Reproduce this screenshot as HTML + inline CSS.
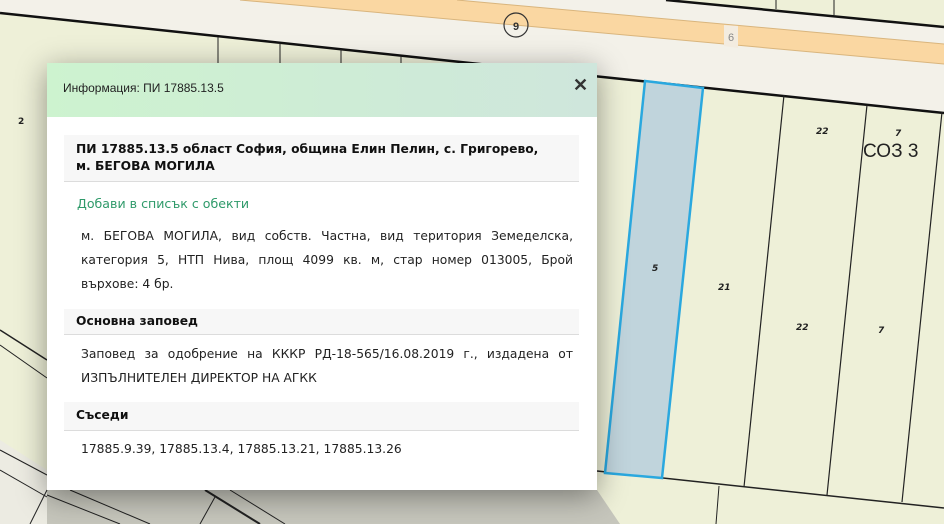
<!DOCTYPE html>
<html><head><meta charset="utf-8"><style>
*{margin:0;padding:0;box-sizing:border-box}
body{width:944px;height:524px;overflow:hidden;position:relative;background:#eef0d8;font-family:"DejaVu Sans","Liberation Sans",sans-serif;}
svg.map{position:absolute;left:0;top:0}
.modal{position:absolute;left:47px;top:63px;width:550px;height:427px;background:#fff;box-shadow:0 6px 28px rgba(0,0,0,.4);}
.hdr{height:54px;background:linear-gradient(90deg,#cdf3cf,#cfe6dc);position:relative;}
.hdr .t{position:absolute;left:16px;top:18px;font-size:12px;color:#222;font-family:"Liberation Sans","DejaVu Sans",sans-serif;}
.hdr .x{position:absolute;left:526px;top:12px;font-size:18px;color:#333;font-family:"Liberation Sans",sans-serif;font-weight:bold}
.sec{position:absolute;left:17px;width:515px;background:#f7f7f7;border-bottom:1px solid #dcdcdc;font-weight:bold;font-size:12.3px;color:#111;padding:0 12px;}
.p{position:absolute;left:34px;width:492px;font-size:12.3px;color:#222;line-height:24px;text-align:justify;}
.lnk{position:absolute;left:30px;top:133px;font-size:12.6px;color:#2f9a6a;font-family:"DejaVu Sans",sans-serif;}
</style></head><body>
<svg class="map" width="944" height="524" viewBox="0 0 944 524">
<polygon points="0,0 944,0 944,113 470,63 0,13" fill="#f3f1e9"/>
<polygon points="666,0 944,0 944,27" fill="#eef0d8"/>
<polygon points="240,0 457,0 944,44 944,64" fill="#fad7a2"/>
<line x1="240" y1="0" x2="944" y2="64" stroke="#d9b57d" stroke-width="1"/>
<line x1="457" y1="0" x2="944" y2="44" stroke="#d9b57d" stroke-width="1"/>
<polygon points="724,25 738,26 738,48 724,46" fill="#f3ece0"/>
<text x="731" y="41" font-size="11" fill="#888" text-anchor="middle" font-family="Liberation Sans">6</text>
<circle cx="516" cy="25" r="12" fill="none" stroke="#333" stroke-width="1.2"/>
<text x="516" y="30" font-size="11" font-weight="bold" fill="#333" text-anchor="middle" font-family="Liberation Sans">9</text>
<polyline points="666,0 944,27" stroke="#111" stroke-width="2.5" fill="none"/>
<line x1="776" y1="0" x2="776" y2="9" stroke="#222"/>
<line x1="834" y1="0" x2="834" y2="15" stroke="#222"/>
<polyline points="0,13 470,63 944,113" stroke="#111" stroke-width="2.5" fill="none"/>
<line x1="218" y1="37" x2="218" y2="63" stroke="#222"/>
<line x1="280" y1="43" x2="280" y2="63" stroke="#222"/>
<line x1="341" y1="49" x2="341" y2="63" stroke="#222"/>
<line x1="401" y1="56" x2="401" y2="63" stroke="#222"/>
<line x1="784" y1="95" x2="744" y2="487" stroke="#222" stroke-width="1.2"/>
<line x1="867" y1="105" x2="827" y2="495" stroke="#222" stroke-width="1.2"/>
<line x1="942" y1="112" x2="902" y2="502" stroke="#222" stroke-width="1.2"/>
<polyline points="597,471 944,508" stroke="#222" stroke-width="1.5" fill="none"/>
<line x1="719" y1="486" x2="716" y2="524" stroke="#222"/>
<polygon points="645,81 703,88 662,478 605,473" fill="#c0d4dc" stroke="#2aa8df" stroke-width="2.5"/>
<g font-family="DejaVu Sans" font-weight="bold" font-style="italic" font-size="9" fill="#222">
<text x="652" y="271">5</text><text x="718" y="290">21</text><text x="816" y="134">22</text><text x="895" y="136">7</text>
<text x="796" y="330">22</text><text x="878" y="333">7</text><text x="18" y="124" font-style="normal">2</text></g>
<text x="863" y="157" font-size="19" fill="#222" font-family="Liberation Sans">СОЗ 3</text>
<polygon points="0,440 47,470 47,524 0,524" fill="#ecebe2"/>
<polygon points="47,490 597,490 620,524 47,524" fill="#c6c6bc"/>
<g stroke="#222" fill="none">
<line x1="0" y1="330" x2="47" y2="360" stroke-width="1.5"/>
<line x1="0" y1="345" x2="47" y2="378"/>
<line x1="0" y1="450" x2="47" y2="475"/>
<line x1="0" y1="470" x2="47" y2="497"/>
<line x1="47" y1="495" x2="120" y2="524"/>
<line x1="70" y1="490" x2="150" y2="524"/>
<line x1="205" y1="490" x2="260" y2="524" stroke-width="2"/>
<line x1="230" y1="490" x2="285" y2="524"/>
<line x1="215" y1="497" x2="200" y2="524"/>
<line x1="47" y1="490" x2="30" y2="524"/>
</g>
</svg>
<div class="modal">
<div class="hdr"><div class="t">Информация: ПИ 17885.13.5</div><div class="x">✕</div></div>
<div class="sec" style="top:72px;height:47px;padding-top:6px;line-height:17px;padding-right:30px">ПИ 17885.13.5 област София, община Елин Пелин, с. Григорево, м. БЕГОВА МОГИЛА</div>
<div class="lnk">Добави в списък с обекти</div>
<div class="p" style="top:161px">м. БЕГОВА МОГИЛА, вид собств. Частна, вид територия Земеделска, категория 5, НТП Нива, площ 4099 кв. м, стар номер 013005, Брой върхове: 4 бр.</div>
<div class="sec" style="top:246px;height:26px;line-height:25px">Основна заповед</div>
<div class="p" style="top:279px">Заповед за одобрение на КККР РД-18-565/16.08.2019 г., издадена от ИЗПЪЛНИТЕЛЕН ДИРЕКТОР НА АГКК</div>
<div class="sec" style="top:339px;height:29px;line-height:27px">Съседи</div>
<div class="p" style="top:374px;text-align:left">17885.9.39, 17885.13.4, 17885.13.21, 17885.13.26</div>
</div>
</body></html>
